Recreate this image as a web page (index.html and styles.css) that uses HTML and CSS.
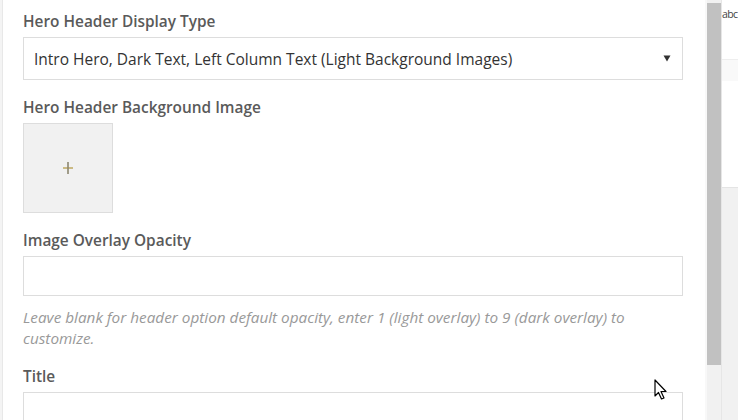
FILE: index.html
```html
<!DOCTYPE html>
<html lang="en">
<head>
    <meta charset="UTF-8">
    <meta name="viewport" content="width=device-width, initial-scale=1.0">
    <title>Hero Header Settings</title>
    <link rel="stylesheet" href="styles.css">
</head>
<body>
    <div class="screen">
        <div class="edge"></div>

        <div class="panel">
            <div class="field">
                <label class="label">Hero Header Display Type</label>
                <div class="select">
                    <span>Intro Hero, Dark Text, Left Column Text (Light Background Images)</span>
                    <svg class="caret" width="8" height="7" viewBox="0 0 8 7"><path d="M0.5 0.5 H7.5 L4 6.5 Z" fill="#333"/></svg>
                </div>
            </div>

            <div class="field">
                <label class="label">Hero Header Background Image</label>
                <div class="image-pick">
                    <svg width="12" height="14" viewBox="0 0 12 14">
                        <path d="M1 7 H11" stroke="#c2ad6a" stroke-width="1.6"/>
                        <path d="M6 1 V13" stroke="#8c8770" stroke-width="1.6"/>
                    </svg>
                </div>
            </div>

            <div class="field">
                <label class="label">Image Overlay Opacity</label>
                <div class="input"></div>
                <p class="help">Leave blank for header option default opacity, enter 1 (light overlay) to 9 (dark overlay) to customize.</p>
            </div>

            <div class="field">
                <label class="label">Title</label>
                <div class="input"></div>
            </div>
        </div>

        <div class="scrollbar">
            <div class="thumb"></div>
        </div>

        <div class="behind">
            <div class="behind-text">abc</div>
            <div class="behind-row"></div>
            <div class="behind-gap"></div>
            <div class="behind-fill"></div>
        </div>

        <!-- mouse pointer -->
        <svg class="pointer" width="14" height="22" viewBox="0 0 14 22">
            <path d="M1 1 V17 L4.5 13.5 L7.5 20 L10 19 L7 12.5 H12 Z" fill="#fff" stroke="#000" stroke-width="1.2" stroke-linejoin="round"/>
        </svg>
    </div>
</body>
</html>
```

FILE: styles.css
```css
html, body {
    margin: 0;
    padding: 0;
    background: #fff;
    overflow: hidden;
}
.screen {
    position: relative;
    display: flex;
    width: 738px;
    height: 420px;
    font-family: "Open Sans", Arial, sans-serif;
}
.edge {
    width: 2px;
    background: #f4f4f4;
    border-right: 1px solid #e8e8e8;
}
.panel {
    width: 660px;
    padding: 11px 22px 0 20px;
    background: #fff;
}
.field {
    margin-bottom: 17px;
}
.label {
    display: block;
    font-size: 15.4px;
    font-weight: 600;
    line-height: 22px;
    color: #5a5a5a;
    margin-bottom: 4px;
}
.select {
    display: flex;
    align-items: center;
    justify-content: space-between;
    height: 41px;
    padding: 0 10px 0 10px;
    border: 1px solid #ddd;
    font-size: 15.5px;
    color: #333;
}
.caret {
    margin-right: 1px;
}
.image-pick {
    display: flex;
    align-items: center;
    justify-content: center;
    width: 88px;
    height: 88px;
    background: #f1f1f1;
    border: 1px solid #ddd;
}
.input {
    height: 38px;
    border: 1px solid #ddd;
    background: #fff;
}
.help {
    margin: 11px 0 0;
    font-size: 15.3px;
    font-style: italic;
    line-height: 21px;
    color: #999;
}
.scrollbar {
    width: 14px;
    padding-top: 3px;
    background: #f1f1f1;
    border-left: 2px solid #f8f8f8;
}
.thumb {
    height: 362px;
    background: #c1c1c1;
}
.behind {
    flex: 1;
    display: flex;
    flex-direction: column;
    overflow: hidden;
    border-left: 1px solid #e6e6e6;
}
.behind-text {
    height: 59px;
    padding-top: 7px;
    box-sizing: border-box;
    font-size: 10.5px;
    letter-spacing: -0.6px;
    color: #444;
    white-space: nowrap;
}
.behind-row {
    height: 21px;
    background: #f9f9f9;
    border-top: 1px solid #eee;
}
.behind-gap {
    height: 106px;
    border-bottom: 1px solid #e4e4e4;
}
.behind-fill {
    flex: 1;
    background: #f1f1f1;
}
.pointer {
    position: absolute;
    left: 654px;
    top: 379px;
}
```
